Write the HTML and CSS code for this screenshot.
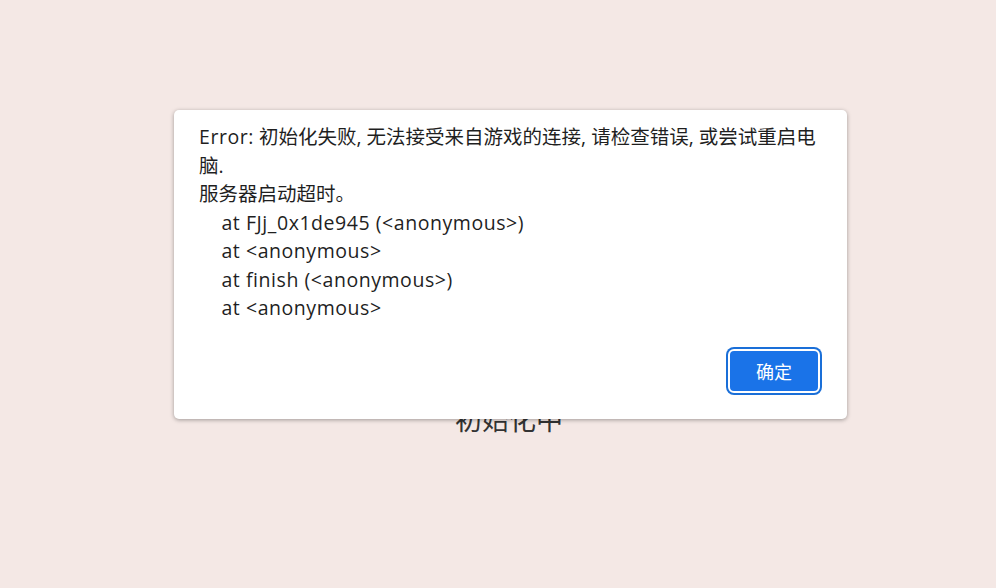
FILE: index.html
```html
<!DOCTYPE html>
<html lang="zh-CN">
<head>
<meta charset="utf-8">
<link rel="stylesheet" href="styles.css">
</head>
<body>
<main class="page">
  <div class="loading">初始化中</div>
</main>
<div class="overlay">
  <div class="dialog">
    <div class="message"><span class="latin">Error:</span> 初始化失败, 无法接受来自游戏的连接, 请检查错误, 或尝试重启电脑.
服务器启动超时。
<span class="latin">    at FJj_0x1de945 (&lt;anonymous&gt;)
    at &lt;anonymous&gt;
    at finish (&lt;anonymous&gt;)
    at &lt;anonymous&gt;</span></div>
    <div class="actions">
      <button class="ok">确定</button>
    </div>
  </div>
</div>
</body>
</html>
```

FILE: styles.css
```css
html, body {
  margin: 0;
  height: 100%;
}
body {
  background: #f4e8e5;
  font-family: "Open Sans", "Noto Sans CJK SC", sans-serif;
  color: #202124;
}
.page {
  display: flex;
  justify-content: center;
  padding-top: 401px;
  padding-left: 22px;
}
.loading {
  font-family: "Noto Sans CJK SC", sans-serif;
  font-size: 27px;
  line-height: 36px;
  color: #333;
}
.overlay {
  position: absolute;
  left: 0;
  top: 0;
  right: 0;
  display: flex;
  justify-content: center;
  padding-top: 110px;
  padding-left: 25px;
}
.dialog {
  width: 673px;
  height: 309px;
  box-sizing: border-box;
  background: #fff;
  border-radius: 5px;
  box-shadow: 0 1px 4px rgba(0,0,0,0.35);
  padding: 13px 27px 26px 25px;
  display: flex;
  flex-direction: column;
  justify-content: space-between;
}
.message {
  white-space: pre-wrap;
  font-size: 19.5px;
  line-height: 28.5px;
  color: #1f1f1f;
}
.latin {
  letter-spacing: 0.55px;
}
.actions {
  display: flex;
  justify-content: flex-end;
}
.ok {
  width: 92px;
  height: 44px;
  margin: 0;
  background: #1a73e8;
  color: #fff;
  border: 2px solid #fff;
  box-shadow: 0 0 0 2px #1a6fd8;
  border-radius: 6px;
  font-family: "Noto Sans CJK SC", sans-serif;
  font-size: 18px;
  box-sizing: border-box;
}
```
